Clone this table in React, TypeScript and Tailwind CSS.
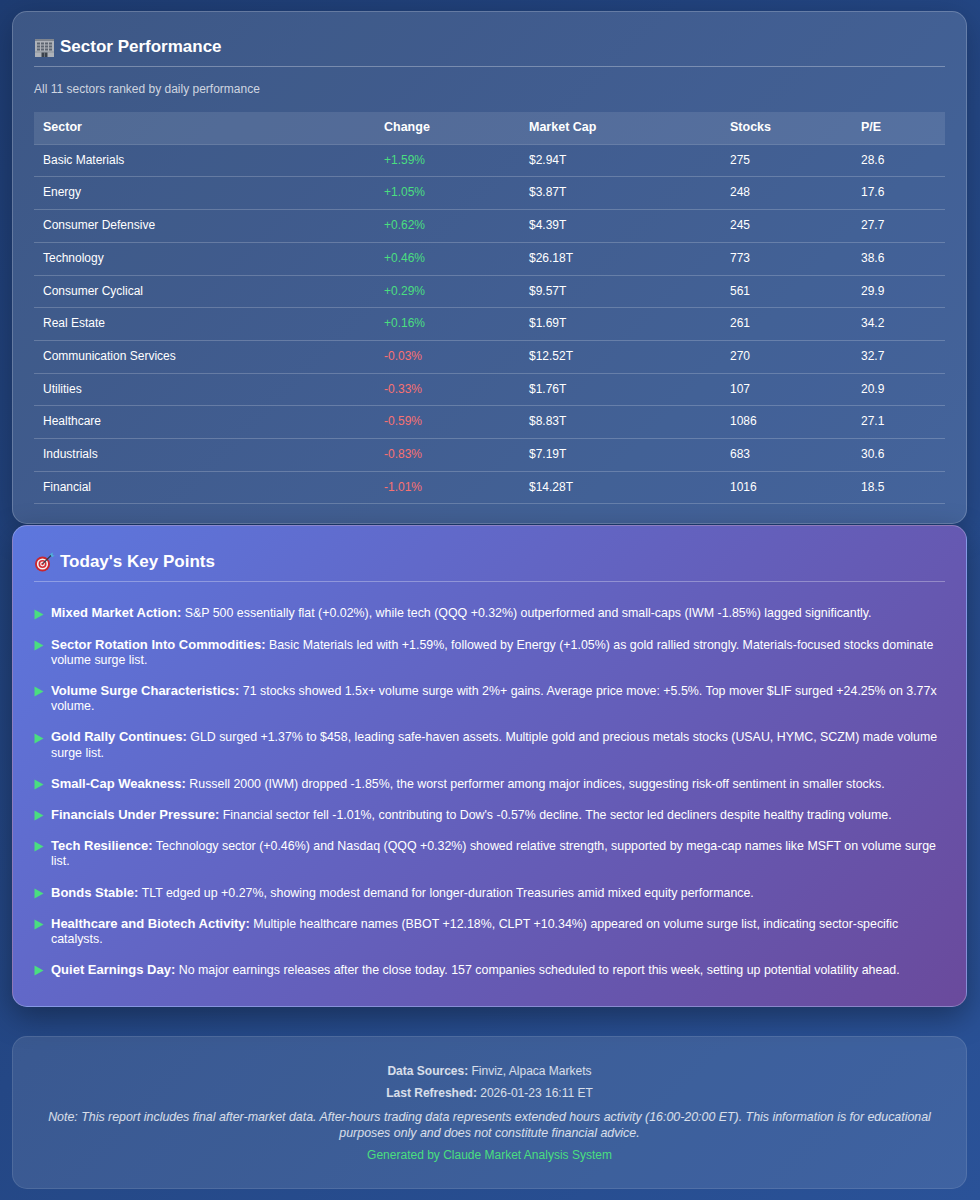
import type { ReactNode } from "react"

type Sector = {
  name: string
  change: string
  cap: string
  stocks: string
  pe: string
}

const SECTORS: Sector[] = [
  { name: "Basic Materials", change: "+1.59%", cap: "$2.94T", stocks: "275", pe: "28.6" },
  { name: "Energy", change: "+1.05%", cap: "$3.87T", stocks: "248", pe: "17.6" },
  { name: "Consumer Defensive", change: "+0.62%", cap: "$4.39T", stocks: "245", pe: "27.7" },
  { name: "Technology", change: "+0.46%", cap: "$26.18T", stocks: "773", pe: "38.6" },
  { name: "Consumer Cyclical", change: "+0.29%", cap: "$9.57T", stocks: "561", pe: "29.9" },
  { name: "Real Estate", change: "+0.16%", cap: "$1.69T", stocks: "261", pe: "34.2" },
  { name: "Communication Services", change: "-0.03%", cap: "$12.52T", stocks: "270", pe: "32.7" },
  { name: "Utilities", change: "-0.33%", cap: "$1.76T", stocks: "107", pe: "20.9" },
  { name: "Healthcare", change: "-0.59%", cap: "$8.83T", stocks: "1086", pe: "27.1" },
  { name: "Industrials", change: "-0.83%", cap: "$7.19T", stocks: "683", pe: "30.6" },
  { name: "Financial", change: "-1.01%", cap: "$14.28T", stocks: "1016", pe: "18.5" },
]

const KEY_POINTS: { title: string; text: string }[] = [
  {
    title: "Mixed Market Action:",
    text: "S&P 500 essentially flat (+0.02%), while tech (QQQ +0.32%) outperformed and small-caps (IWM -1.85%) lagged significantly.",
  },
  {
    title: "Sector Rotation Into Commodities:",
    text: "Basic Materials led with +1.59%, followed by Energy (+1.05%) as gold rallied strongly. Materials-focused stocks dominate volume surge list.",
  },
  {
    title: "Volume Surge Characteristics:",
    text: "71 stocks showed 1.5x+ volume surge with 2%+ gains. Average price move: +5.5%. Top mover $LIF surged +24.25% on 3.77x volume.",
  },
  {
    title: "Gold Rally Continues:",
    text: "GLD surged +1.37% to $458, leading safe-haven assets. Multiple gold and precious metals stocks (USAU, HYMC, SCZM) made volume surge list.",
  },
  {
    title: "Small-Cap Weakness:",
    text: "Russell 2000 (IWM) dropped -1.85%, the worst performer among major indices, suggesting risk-off sentiment in smaller stocks.",
  },
  {
    title: "Financials Under Pressure:",
    text: "Financial sector fell -1.01%, contributing to Dow's -0.57% decline. The sector led decliners despite healthy trading volume.",
  },
  {
    title: "Tech Resilience:",
    text: "Technology sector (+0.46%) and Nasdaq (QQQ +0.32%) showed relative strength, supported by mega-cap names like MSFT on volume surge list.",
  },
  {
    title: "Bonds Stable:",
    text: "TLT edged up +0.27%, showing modest demand for longer-duration Treasuries amid mixed equity performance.",
  },
  {
    title: "Healthcare and Biotech Activity:",
    text: "Multiple healthcare names (BBOT +12.18%, CLPT +10.34%) appeared on volume surge list, indicating sector-specific catalysts.",
  },
  {
    title: "Quiet Earnings Day:",
    text: "No major earnings releases after the close today. 157 companies scheduled to report this week, setting up potential volatility ahead.",
  },
]

function BuildingIcon() {
  return (
    <svg width="21" height="20" viewBox="0 0 21 20" className="shrink-0">
      <rect x="1" y="2" width="19" height="18" fill="#aeb2b9" />
      <rect x="1" y="2" width="19" height="2" fill="#7f858e" />
      {[5.5, 8.5, 11.5].map((y) =>
        [3, 7, 11, 15].map((x) => (
          <rect key={`${x}-${y}`} x={x} y={y} width="3" height="2" fill="#5d6571" />
        ))
      )}
      <rect x="1" y="14.5" width="19" height="1" fill="#8d939c" />
      <rect x="7.5" y="15.5" width="6" height="4.5" fill="#3b424c" />
      <rect x="10.2" y="15.5" width="0.6" height="4.5" fill="#8d939c" />
    </svg>
  )
}

function TargetIcon() {
  return (
    <svg width="21" height="20" viewBox="0 0 21 20" className="shrink-0">
      <circle cx="8.5" cy="12" r="7.5" fill="#c9262e" />
      <circle cx="8.5" cy="12" r="5.6" fill="#f4f4f4" />
      <circle cx="8.5" cy="12" r="4" fill="#d42d35" />
      <circle cx="8.5" cy="12" r="2.4" fill="#f4f4f4" />
      <circle cx="8.5" cy="12" r="1.2" fill="#d42d35" />
      <line x1="8.8" y1="11.7" x2="17.5" y2="3" stroke="#2f3a4a" strokeWidth="1.2" />
      <path d="M16 2.2 L18.8 0.6 L18.4 3.2 L20.6 3.4 L18.2 5.2 Z" fill="#4fb4d8" />
    </svg>
  )
}

function CardHeading({ icon, children }: { icon: ReactNode; children: ReactNode }) {
  return (
    <h2 className="flex h-[32px] items-start gap-[5px] border-b border-white/30 pb-[8px] text-[17px] font-bold leading-[24px] text-white">
      <span className="flex h-[24px] items-center">{icon}</span>
      {children}
    </h2>
  )
}

function SectorTable() {
  return (
    <table className="mt-[15px] w-full border-collapse text-left text-[12px] text-white">
      <colgroup>
        <col className="w-[341px]" />
        <col className="w-[145px]" />
        <col className="w-[201px]" />
        <col className="w-[131px]" />
        <col />
      </colgroup>
      <thead>
        <tr className="bg-white/10">
          {["Sector", "Change", "Market Cap", "Stocks", "P/E"].map((h) => (
            <th
              key={h}
              className="border-b border-white/20 py-[8px] pl-[9px] text-[12.5px] font-bold leading-[15.7px]"
            >
              {h}
            </th>
          ))}
        </tr>
      </thead>
      <tbody>
        {SECTORS.map((s) => (
          <tr key={s.name}>
            <td className="border-b border-white/20 py-[8px] pl-[9px] leading-[15.7px]">{s.name}</td>
            <td
              className={
                "border-b border-white/20 py-[8px] pl-[9px] leading-[15.7px] " +
                (s.change.startsWith("+") ? "text-[#4ade80]" : "text-[#f87171]")
              }
            >
              {s.change}
            </td>
            <td className="border-b border-white/20 py-[8px] pl-[9px] leading-[15.7px]">{s.cap}</td>
            <td className="border-b border-white/20 py-[8px] pl-[9px] leading-[15.7px]">{s.stocks}</td>
            <td className="border-b border-white/20 py-[8px] pl-[9px] leading-[15.7px]">{s.pe}</td>
          </tr>
        ))}
      </tbody>
    </table>
  )
}

export default function App() {
  return (
    <div className="min-h-[1200px] bg-[linear-gradient(135deg,#1e3c72_0%,#2a5298_100%)] pl-[12px] pr-[13px] pt-[11px] font-['Liberation_Sans',Arial,sans-serif]">
      {/* Sector performance */}
      <section className="rounded-[15px] border border-white/20 bg-white/[0.14] px-[21px] pb-[19px] pt-[23px] shadow-[0_8px_32px_rgba(0,0,0,0.25)]">
        <CardHeading icon={<BuildingIcon />}>Sector Performance</CardHeading>
        <p className="mt-[14px] text-[12px] leading-[16px] text-white/75">
          All 11 sectors ranked by daily performance
        </p>
        <SectorTable />
      </section>

      {/* Key points */}
      <section className="mt-[1px] rounded-[15px] border border-white/25 bg-[linear-gradient(135deg,#5d77de_0%,#6a4a9c_100%)] px-[21px] pb-[20px] pt-[24px] shadow-[0_10px_30px_rgba(0,0,0,0.35)]">
        <CardHeading icon={<TargetIcon />}>Today&apos;s Key Points</CardHeading>
        <ul className="mt-[16px] text-[12.4px] leading-[15.2px] text-white">
          {KEY_POINTS.map((k) => (
            <li key={k.title} className="flex py-[8px]">
              <span className="flex h-[15.2px] w-[17px] shrink-0 items-center">
                <svg width="10" height="11" viewBox="0 0 10 11">
                  <path d="M0.5 0.5 L9.5 5.5 L0.5 10.5 Z" fill="#4ade80" />
                </svg>
              </span>
              <span>
                <strong className="text-[13px] font-bold leading-[0]">{k.title}</strong> {k.text}
              </span>
            </li>
          ))}
        </ul>
      </section>

      {/* Footer */}
      <footer className="mt-[29px] rounded-[15px] border border-white/10 bg-white/10 px-[21px] pb-[25px] pt-[26px] text-center text-[12px] text-white/80">
        <p className="leading-[16px]">
          <strong className="font-bold">Data Sources:</strong> Finviz, Alpaca Markets
        </p>
        <p className="mt-[6px] leading-[16px]">
          <strong className="font-bold">Last Refreshed:</strong> 2026-01-23 16:11 ET
        </p>
        <p className="mt-[9px] text-[12.4px] italic leading-[15.4px]">
          Note: This report includes final after-market data. After-hours trading data represents extended
          hours activity (16:00-20:00 ET). This information is for educational purposes only and does not
          constitute financial advice.
        </p>
        <p className="mt-[6px] leading-[16px] text-[#4ade80]">Generated by Claude Market Analysis System</p>
      </footer>
    </div>
  )
}
